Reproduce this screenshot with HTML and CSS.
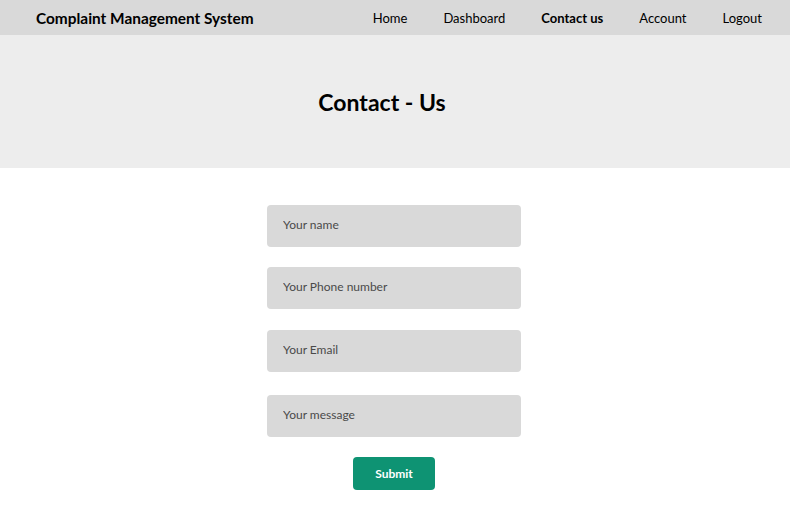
FILE: index.html
```html
<!DOCTYPE html>
<html>
<head>
<meta charset="utf-8">
<link rel="stylesheet" href="styles.css">
</head>
<body>
<header class="topbar">
  <div class="brand">Complaint Management System</div>
  <nav class="nav">
    <a href="#">Home</a>
    <a href="#">Dashboard</a>
    <a href="#" class="active">Contact us</a>
    <a href="#">Account</a>
    <a href="#">Logout</a>
  </nav>
</header>
<section class="hero">
  <h1>Contact - Us</h1>
</section>
<main class="content">
  <form class="form">
    <input class="field f1" type="text" placeholder="Your name">
    <input class="field f2" type="text" placeholder="Your Phone number">
    <input class="field f3" type="text" placeholder="Your Email">
    <input class="field f4" type="text" placeholder="Your message">
    <button class="submit" type="button">Submit</button>
  </form>
</main>
</body>
</html>
```
FILE: styles.css
```css
* { box-sizing: border-box; }
body {
  margin: 0;
  font-family: Lato, "Open Sans", sans-serif;
  background: #ffffff;
  color: #000;
}
.topbar {
  height: 35px;
  background: #d9d9d9;
  display: flex;
  align-items: center;
  justify-content: space-between;
  padding: 0 28px 0 36px;
}
.brand {
  font-size: 15.4px;
  font-weight: 700;
}
.nav {
  display: flex;
  gap: 36px;
}
.nav a {
  font-size: 13px;
  color: #000;
  text-decoration: none;
}
.nav a.active { font-weight: 700; }
.hero {
  height: 133px;
  background: #ededed;
  display: flex;
  align-items: center;
  justify-content: center;
  padding-right: 26px;
}
.hero h1 {
  margin: 0;
  font-size: 23px;
  font-weight: 700;
}
.content {
  display: flex;
  justify-content: center;
  padding-top: 37px;
  padding-right: 2px;
}
.form {
  width: 254px;
  display: flex;
  flex-direction: column;
  align-items: center;
}
.field {
  width: 254px;
  height: 42px;
  border: none;
  border-radius: 4px;
  background: #d9d9d9;
  padding: 0 16px 3px;
  font-family: inherit;
  font-size: 12px;
  outline: none;
}
.f1 { margin-bottom: 20px; }
.f2 { margin-bottom: 21px; }
.f3 { margin-bottom: 23px; }
.f4 { margin-bottom: 20px; }
.field::placeholder { color: #4a4a4a; }
.submit {
  width: 82px;
  height: 33px;
  border: none;
  border-radius: 4px;
  background: #0e9373;
  color: #fff;
  font-family: inherit;
  font-weight: 700;
  font-size: 12px;
}
```
